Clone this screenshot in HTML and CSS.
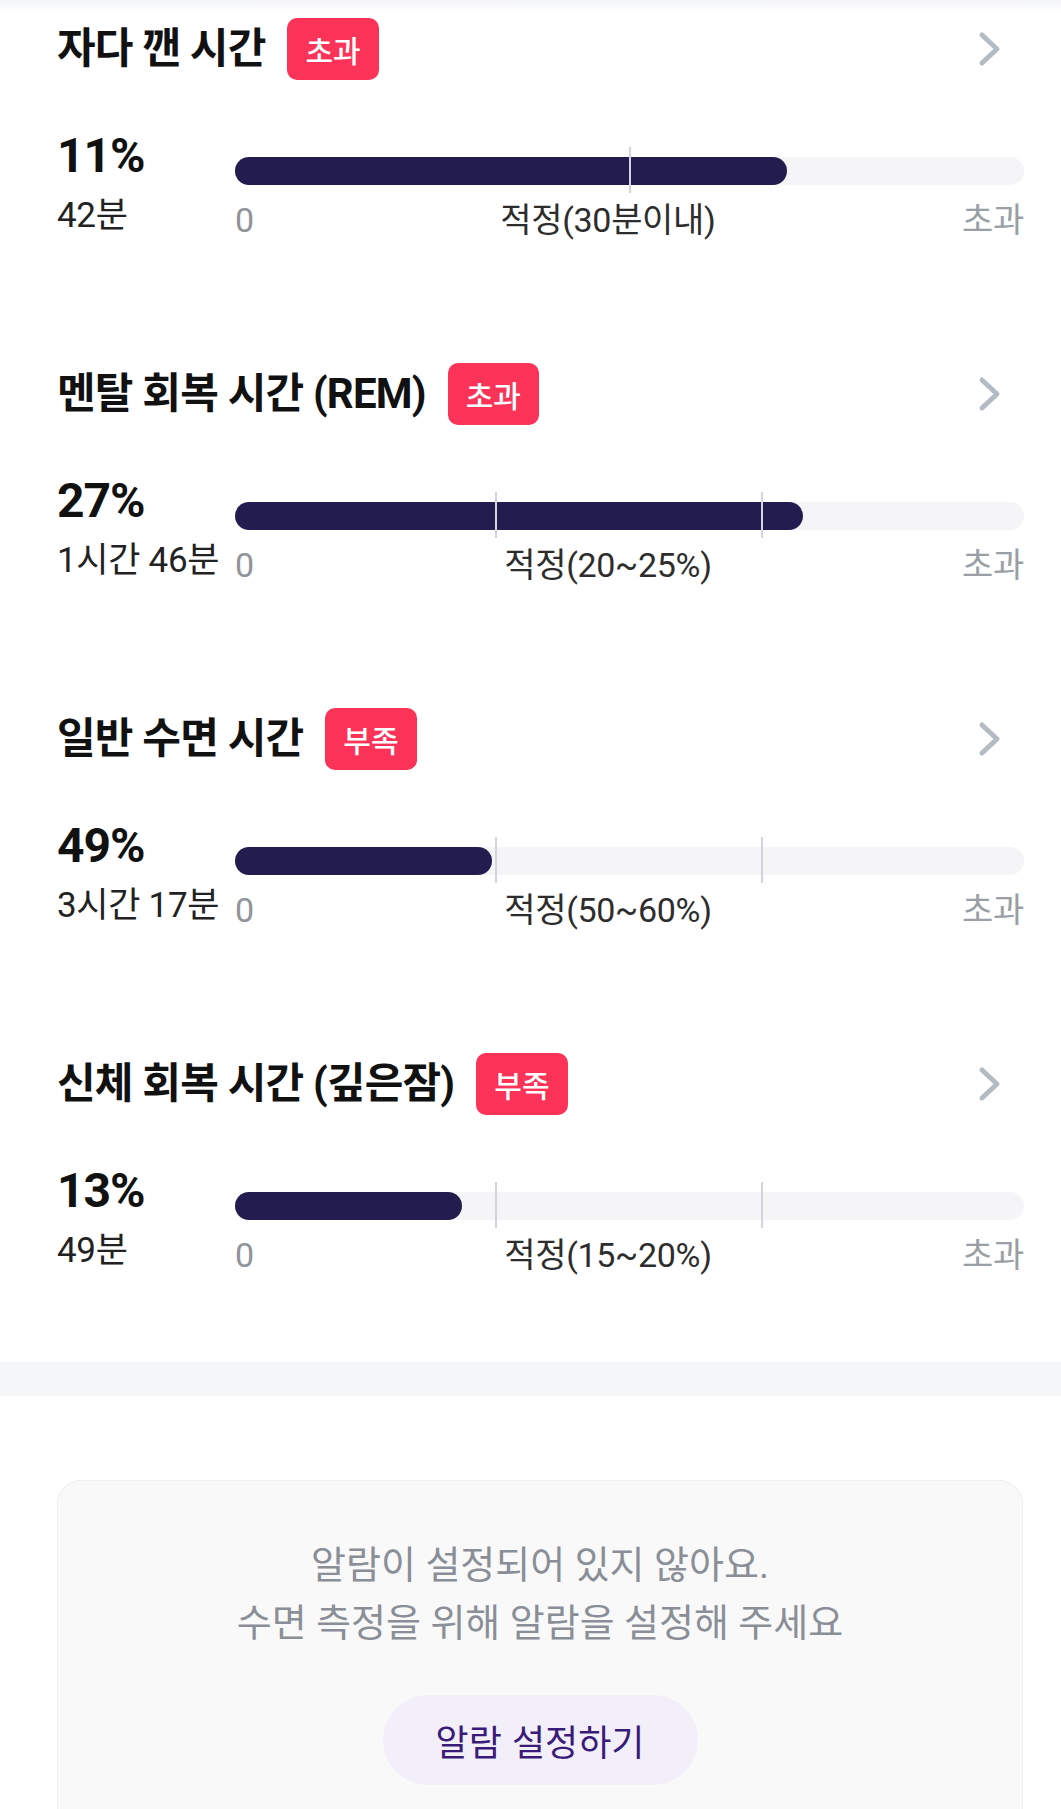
FILE: index.html
```html
<!DOCTYPE html>
<html lang="ko">

<head>
    <meta charset="UTF-8">
    <title>수면 단계 분석</title>
    <link rel="stylesheet" href="styles.css">
</head>

<body>

    <main class="report">

        <section class="stage">
            <div class="stage-head">
                <h2 class="stage-title">자다 깬 시간</h2>
                <span class="badge">초과</span>
                <svg class="chevron" width="24" height="36" viewBox="0 0 24 36">
                    <path d="M4 4 L19 18 L4 32" fill="none" stroke="#b4bbc3" stroke-width="5" stroke-linecap="round" stroke-linejoin="round"></path>
                </svg>
            </div>
            <div class="stat">
                <div class="stat-value">
                    <div class="pct">11%</div>
                    <div class="duration">42분</div>
                </div>
                <div class="stat-chart">
                    <div class="track">
                        <div class="fill" style="width: 70%"></div>
                        <span class="tick" style="left: 50%"></span>
                    </div>
                    <div class="scale">
                        <span class="scale-min">0</span>
                        <span class="scale-mid">적정(30분이내)</span>
                        <span class="scale-max">초과</span>
                    </div>
                </div>
            </div>
        </section>

        <section class="stage">
            <div class="stage-head">
                <h2 class="stage-title">멘탈 회복 시간 (REM)</h2>
                <span class="badge">초과</span>
                <svg class="chevron" width="24" height="36" viewBox="0 0 24 36">
                    <path d="M4 4 L19 18 L4 32" fill="none" stroke="#b4bbc3" stroke-width="5" stroke-linecap="round" stroke-linejoin="round"></path>
                </svg>
            </div>
            <div class="stat">
                <div class="stat-value">
                    <div class="pct">27%</div>
                    <div class="duration">1시간 46분</div>
                </div>
                <div class="stat-chart">
                    <div class="track">
                        <div class="fill" style="width: 72%"></div>
                        <span class="tick" style="left: 33.1%"></span>
                        <span class="tick" style="left: 66.8%"></span>
                    </div>
                    <div class="scale">
                        <span class="scale-min">0</span>
                        <span class="scale-mid">적정(20~25%)</span>
                        <span class="scale-max">초과</span>
                    </div>
                </div>
            </div>
        </section>

        <section class="stage">
            <div class="stage-head">
                <h2 class="stage-title">일반 수면 시간</h2>
                <span class="badge">부족</span>
                <svg class="chevron" width="24" height="36" viewBox="0 0 24 36">
                    <path d="M4 4 L19 18 L4 32" fill="none" stroke="#b4bbc3" stroke-width="5" stroke-linecap="round" stroke-linejoin="round"></path>
                </svg>
            </div>
            <div class="stat">
                <div class="stat-value">
                    <div class="pct">49%</div>
                    <div class="duration">3시간 17분</div>
                </div>
                <div class="stat-chart">
                    <div class="track">
                        <div class="fill" style="width: 32.6%"></div>
                        <span class="tick" style="left: 33.1%"></span>
                        <span class="tick" style="left: 66.8%"></span>
                    </div>
                    <div class="scale">
                        <span class="scale-min">0</span>
                        <span class="scale-mid">적정(50~60%)</span>
                        <span class="scale-max">초과</span>
                    </div>
                </div>
            </div>
        </section>

        <section class="stage">
            <div class="stage-head">
                <h2 class="stage-title">신체 회복 시간 (깊은잠)</h2>
                <span class="badge">부족</span>
                <svg class="chevron" width="24" height="36" viewBox="0 0 24 36">
                    <path d="M4 4 L19 18 L4 32" fill="none" stroke="#b4bbc3" stroke-width="5" stroke-linecap="round" stroke-linejoin="round"></path>
                </svg>
            </div>
            <div class="stat">
                <div class="stat-value">
                    <div class="pct">13%</div>
                    <div class="duration">49분</div>
                </div>
                <div class="stat-chart">
                    <div class="track">
                        <div class="fill" style="width: 28.8%"></div>
                        <span class="tick" style="left: 33.1%"></span>
                        <span class="tick" style="left: 66.8%"></span>
                    </div>
                    <div class="scale">
                        <span class="scale-min">0</span>
                        <span class="scale-mid">적정(15~20%)</span>
                        <span class="scale-max">초과</span>
                    </div>
                </div>
            </div>
        </section>

    </main>

    <div class="divider"></div>

    <section class="alarm">
        <div class="alarm-card">
            <p class="alarm-text">알람이 설정되어 있지 않아요.<br>수면 측정을 위해 알람을 설정해 주세요</p>
            <button class="alarm-button" type="button">알람 설정하기</button>
        </div>
    </section>

</body>

</html>
```

FILE: styles.css
```css
body {
    margin: 0;
    background: #ffffff;
    font-family: Roboto, "Noto Sans CJK KR", sans-serif;
    color: #111111;
}

.report {
    padding: 0 37px 0 57px;
    background: linear-gradient(to bottom, #f3f4f7 0, #ffffff 12px) no-repeat;
}

.stage {
    box-sizing: border-box;
    height: 345px;
    padding-top: 18px;
}

.stage:last-child {
    height: 327px;
}

.stage-head {
    display: flex;
    align-items: center;
    height: 62px;
}

.stage-title {
    margin: 0;
    font-size: 42px;
    line-height: 62px;
    font-weight: 700;
    letter-spacing: -0.8px;
    font-feature-settings: "palt";
}

.badge {
    display: inline-flex;
    align-items: center;
    height: 62px;
    margin-left: 22px;
    padding: 0 18px;
    border-radius: 10px;
    background: #fb3358;
    color: #ffffff;
    font-size: 30px;
    font-weight: 500;
    letter-spacing: 0;
}

.chevron {
    margin-left: auto;
    margin-right: 22px;
}

.stat {
    display: grid;
    grid-template-columns: 178px 1fr;
    margin-top: 50px;
}

.pct {
    font-size: 48px;
    line-height: 52px;
    font-weight: 700;
    letter-spacing: -1px;
}

.duration {
    margin-top: 12px;
    font-size: 35px;
    line-height: 44px;
    color: #222222;
    letter-spacing: -0.3px;
    white-space: nowrap;
}

.track {
    position: relative;
    height: 28px;
    margin-top: 27px;
    border-radius: 14px;
    background: #f5f5f7;
}

.fill {
    height: 100%;
    border-radius: 14px;
    background: #231c4f;
}

.tick {
    position: absolute;
    top: -10px;
    bottom: -8px;
    width: 2px;
    margin-left: -1px;
    background: #d5d4de;
}

.scale {
    display: flex;
    justify-content: space-between;
    margin-top: 15px;
    font-size: 34px;
    line-height: 40px;
    letter-spacing: -0.3px;
}

.scale-min {
    color: #8f949b;
}

.scale-mid {
    color: #2d2d2d;
}

.scale-max {
    color: #9a9fa6;
}

.divider {
    height: 34px;
    background: #f5f6f8;
}

.alarm {
    padding: 84px 38px 0 57px;
}

.alarm-card {
    box-sizing: border-box;
    height: 400px;
    padding-top: 55px;
    border: 1px solid #efeff2;
    border-radius: 24px;
    background: #f9f9fa;
    text-align: center;
}

.alarm-text {
    margin: 0;
    font-size: 38px;
    line-height: 58px;
    color: #8a8e96;
    letter-spacing: 0;
}

.alarm-button {
    width: 315px;
    height: 90px;
    margin-top: 43px;
    border: none;
    border-radius: 45px;
    background: #f2eff9;
    color: #3b1b7a;
    font-family: "Noto Sans CJK KR", sans-serif;
    font-size: 36px;
    letter-spacing: 0;
}
```
